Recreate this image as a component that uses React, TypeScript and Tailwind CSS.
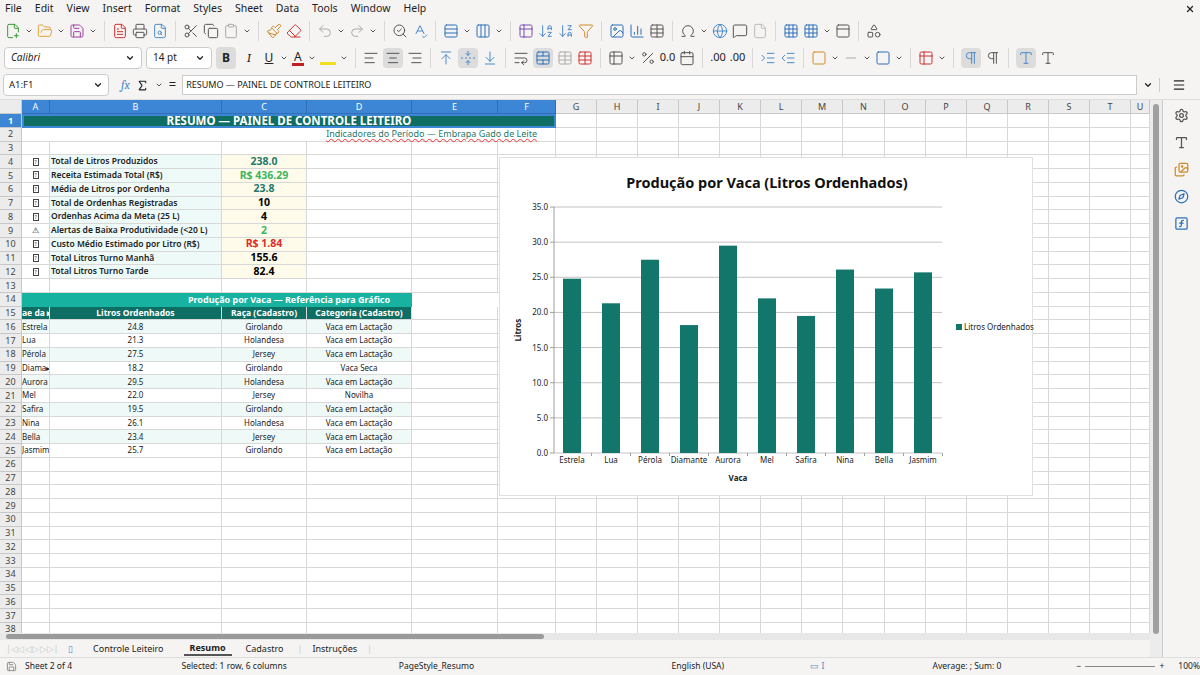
import React from "react";
import {
  FilePlus2, FolderOpen, Save, FileText, Printer, FileSearch, Scissors, Copy, Clipboard, Paintbrush, Eraser,
  Undo2, Redo2, SearchCheck, SpellCheck, Rows3, Columns3, ArrowDownAZ, ArrowDownZA, Filter, Image, BarChart3,
  Table2, Omega, Globe, MessageSquare, File, Grid3x3, PanelTop, Shapes, ChevronDown, AlignLeft, AlignCenter,
  AlignRight, ArrowUpToLine, FoldVertical, ArrowDownToLine, WrapText, TableCellsMerge, Table, Percent,
  Calendar, IndentIncrease, IndentDecrease, Square, Minus, Pilcrow, Menu, Settings, Type, Images, Compass,
  FunctionSquare, Sigma, X,
} from "lucide-react";

const F = { fontFamily: '"Noto Sans", "Open Sans", sans-serif' };

const colW = [28, 172, 85, 105, 86, 58, 41, 41, 41, 41, 41, 41, 41, 42, 41, 41, 41, 41, 41, 41, 19];
const colN = ["A","B","C","D","E","F","G","H","I","J","K","L","M","N","O","P","Q","R","S","T","U"];

const kpis: [string, string, string, string][] = [
  ["?", "Total de Litros Produzidos", "238.0", "text-[#1d7a6c]"],
  ["?", "Receita Estimada Total (R$)", "R$ 436.29", "text-[#3cb563]"],
  ["?", "Média de Litros por Ordenha", "23.8", "text-[#1d7a6c]"],
  ["?", "Total de Ordenhas Registradas", "10", "text-black"],
  ["?", "Ordenhas Acima da Meta (25 L)", "4", "text-black"],
  ["⚠", "Alertas de Baixa Produtividade (<20 L)", "2", "text-[#3cb563]"],
  ["?", "Custo Médio Estimado por Litro (R$)", "R$ 1.84", "text-[#e02b2b]"],
  ["?", "Total Litros Turno Manhã", "155.6", "text-black"],
  ["?", "Total Litros Turno Tarde", "82.4", "text-black"],
];

const cows: [string, number, string, string][] = [
  ["Estrela", 24.8, "Girolando", "Vaca em Lactação"],
  ["Lua", 21.3, "Holandesa", "Vaca em Lactação"],
  ["Pérola", 27.5, "Jersey", "Vaca em Lactação"],
  ["Diamante", 18.2, "Girolando", "Vaca Seca"],
  ["Aurora", 29.5, "Holandesa", "Vaca em Lactação"],
  ["Mel", 22.0, "Jersey", "Novilha"],
  ["Safira", 19.5, "Girolando", "Vaca em Lactação"],
  ["Nina", 26.1, "Holandesa", "Vaca em Lactação"],
  ["Bella", 23.4, "Jersey", "Vaca em Lactação"],
  ["Jasmim", 25.7, "Girolando", "Vaca em Lactação"],
];

function Cell({ i, children, cls = "" }: { i: number; children?: React.ReactNode; cls?: string }) {
  return (
    <div className={"shrink-0 h-full border-r border-b border-[#d8d8d8] flex items-center overflow-hidden whitespace-nowrap " + cls} style={{ width: colW[i] }}>
      {children}
    </div>
  );
}

function Row({ n, sel, children }: { n: number; sel?: boolean; children?: React.ReactNode }) {
  return (
    <div className="flex h-[13.75px] shrink-0">
      <div className={"w-[22px] shrink-0 border-r border-b border-[#c8c8c8] flex items-center justify-center text-[9px] " + (sel ? "bg-[#3d86d6] text-white font-bold" : "bg-[#ececec] text-[#444]")}>{n}</div>
      {children}
    </div>
  );
}

function Empty({ from = 0 }: { from?: number }) {
  return <>{colW.slice(from).map((_, k) => <Cell key={k} i={k + from} />)}</>;
}

function Chart() {
  const L = 54, T = 49, R = 442, B = 295;
  const u = (B - T) / 35;
  return (
    <div className="absolute left-[499px] top-[57px] w-[534px] h-[339px] bg-white border border-[#e0e0e0]">
      <svg width="534" height="339" style={F}>
        <text x="267" y="30" textAnchor="middle" fontSize="14.5" fontWeight="bold" fill="#111">Produção por Vaca (Litros Ordenhados)</text>
        {[0, 5, 10, 15, 20, 25, 30, 35].map((v) => (
          <g key={v}>
            <line x1={L} x2={R} y1={B - v * u} y2={B - v * u} stroke="#b3b3b3" strokeWidth="0.8" />
            <line x1={L - 4} x2={L} y1={B - v * u} y2={B - v * u} stroke="#888" strokeWidth="0.8" />
            <text x={L - 6} y={B - v * u + 3} textAnchor="end" fontSize="8" fill="#222">{v.toFixed(1)}</text>
          </g>
        ))}
        <line x1={L} x2={L} y1={T} y2={B} stroke="#888" strokeWidth="0.8" />
        {cows.map(([n, v], k) => {
          const cx = 72 + k * 39;
          return (
            <g key={n}>
              <rect x={cx - 9} y={B - v * u} width="18" height={v * u} fill="#13766b" />
              <text x={cx} y={B + 10} textAnchor="middle" fontSize="8" fill="#222">{n}</text>
              <line x1={cx + 19.5} x2={cx + 19.5} y1={B} y2={B + 3} stroke="#888" strokeWidth="0.8" />
            </g>
          );
        })}
        <text x="238" y="323" textAnchor="middle" fontSize="8" fontWeight="bold" fill="#222">Vaca</text>
        <text transform="translate(21 172) rotate(-90)" textAnchor="middle" fontSize="8" fontWeight="bold" fill="#222">Litros</text>
        <rect x="456" y="166" width="6" height="6" fill="#13766b" />
        <text x="464" y="172" fontSize="8" fill="#222">Litros Ordenhados</text>
      </svg>
    </div>
  );
}

const I = ({ c, color = "#555" }: { c: React.ElementType; color?: string }) => {
  const C = c;
  return <C size={16} color={color} strokeWidth={1.5} />;
};
const Dd = () => <ChevronDown size={8} color="#555" strokeWidth={3} />;
const Sep = () => <div className="w-px h-[20px] bg-[#d8d8d8] mx-[3px]" />;

export default function App() {
  return (
    <div className="w-[1200px] h-[675px] overflow-hidden bg-[#f5f4f2] flex flex-col text-[#222]" style={F}>
      <div className="h-[17px] shrink-0 flex items-center px-[5px] gap-[13px] text-[10.5px]">
        {["File","Edit","View","Insert","Format","Styles","Sheet","Data","Tools","Window","Help"].map((m) => <span key={m}>{m}</span>)}
        <div className="flex-1" />
        <X size={10} strokeWidth={3} />
      </div>
      <div className="h-[27px] shrink-0 flex items-center px-[5px] gap-[4px]">
        <I c={FilePlus2} color="#3a9a3a" /><Dd /><I c={FolderOpen} color="#e3a33a" /><Dd /><I c={Save} color="#a23fa8" /><Dd /><Sep />
        <I c={FileText} color="#c33" /><I c={Printer} /><I c={FileSearch} color="#4a8ac9" /><Sep />
        <I c={Scissors} /><I c={Copy} /><I c={Clipboard} color="#aaa" /><Dd /><Sep />
        <I c={Paintbrush} color="#d08a2a" /><I c={Eraser} color="#c33" /><Sep />
        <I c={Undo2} color="#aaa" /><Dd /><I c={Redo2} color="#aaa" /><Dd /><Sep />
        <I c={SearchCheck} /><I c={SpellCheck} color="#4a8ac9" /><Sep />
        <I c={Rows3} color="#2b6fb8" /><Dd /><I c={Columns3} color="#2b6fb8" /><Dd /><Sep />
        <I c={Table2} color="#7a4db8" /><I c={ArrowDownAZ} color="#4a8ac9" /><I c={ArrowDownZA} color="#4a8ac9" /><I c={Filter} color="#d08a2a" /><Sep />
        <I c={Image} color="#2b6fb8" /><I c={BarChart3} color="#2b6fb8" /><I c={Table} /><Sep />
        <I c={Omega} /><Dd /><I c={Globe} color="#4a8ac9" /><I c={MessageSquare} /><I c={File} color="#bbb" /><Sep />
        <I c={Grid3x3} color="#2b6fb8" /><I c={Grid3x3} color="#2b6fb8" /><Dd /><I c={PanelTop} /><Sep /><I c={Shapes} />
      </div>
      <div className="h-[27px] shrink-0 flex items-center px-[4px] gap-[4px]">
        <div className="w-[138px] h-[22px] bg-white border border-[#ccc] rounded-sm flex items-center justify-between px-[6px] text-[10px] italic">Calibri<ChevronDown size={10} strokeWidth={3} /></div>
        <div className="w-[66px] h-[22px] bg-white border border-[#ccc] rounded-sm flex items-center justify-between px-[6px] text-[10px]">14 pt<ChevronDown size={10} strokeWidth={3} /></div>
        <div className="w-[20px] h-[22px] bg-[#dcdcdc] rounded-sm flex items-center justify-center text-[12px] font-bold">B</div>
        <span className="w-[18px] text-center italic text-[13px] font-serif">I</span>
        <span className="w-[14px] text-center underline text-[12px]">U</span><Dd />
        <span className="text-[12px] border-b-[3px] border-[#c02020] leading-[13px] px-[2px]">A</span><Dd />
        <span className="w-[16px] h-[14px] border-b-[3px] border-[#f0e020]" /><Dd /><Sep />
        <I c={AlignLeft} /><div className="bg-[#dcdcdc] rounded-sm p-[2px]"><I c={AlignCenter} /></div><I c={AlignRight} /><Sep />
        <I c={ArrowUpToLine} color="#4a8ac9" /><div className="bg-[#dcdcdc] rounded-sm p-[2px]"><I c={FoldVertical} color="#4a8ac9" /></div><I c={ArrowDownToLine} color="#4a8ac9" /><Sep />
        <I c={WrapText} /><div className="bg-[#dcdcdc] rounded-sm p-[2px]"><I c={TableCellsMerge} color="#2b6fb8" /></div><I c={Table} color="#aaa" /><I c={Table} color="#c33" /><Sep />
        <I c={Table2} /><Dd /><I c={Percent} /><span className="text-[11px]">0.0</span><I c={Calendar} /><Sep />
        <span className="text-[11px]">.00</span><span className="text-[11px]">.00</span><Sep />
        <I c={IndentIncrease} color="#4a8ac9" /><I c={IndentDecrease} color="#4a8ac9" /><Sep />
        <I c={Square} color="#d08a2a" /><Dd /><I c={Minus} color="#aaa" /><Dd /><I c={Square} color="#2b6fb8" /><Dd /><Sep />
        <I c={Table2} color="#c33" /><Dd /><Sep />
        <div className="bg-[#dcdcdc] rounded-sm p-[2px]"><I c={Pilcrow} color="#4a8ac9" /></div><I c={Pilcrow} /><Sep />
        <div className="bg-[#dcdcdc] rounded-sm p-[2px]"><I c={Type} color="#4a8ac9" /></div><I c={Type} />
      </div>
      <div className="h-[29px] shrink-0 flex items-center px-[3px] gap-[6px] border-b border-[#ddd]">
        <div className="w-[106px] h-[22px] bg-white border border-[#ccc] rounded-sm flex items-center justify-between px-[5px] text-[9.5px]">A1:F1<ChevronDown size={10} strokeWidth={3} /></div>
        <span className="italic text-[#4a8ac9] text-[12px] font-serif ml-[6px]">fx</span>
        <Sigma size={13} /><Dd /><span className="text-[13px]">=</span>
        <div className="flex-1 h-[20px] bg-white border border-[#ccc] flex items-center px-[3px] text-[9px]">RESUMO — PAINEL DE CONTROLE LEITEIRO</div>
        <ChevronDown size={10} strokeWidth={3} />
        <div className="w-[38px] flex justify-center border-l border-[#ccc]"><Menu size={14} /></div>
      </div>
      <div className="flex h-[557px] shrink-0">
        <div className="w-[1150px] flex flex-col overflow-hidden relative">
          <div className="relative flex-1 overflow-hidden bg-white">
            <div className="flex h-[14px] text-[9px]">
              <div className="w-[22px] shrink-0 bg-[#ececec] border-r border-b border-[#c8c8c8]" />
              {colN.map((c, k) => (
                <div key={c} className={"shrink-0 flex items-center justify-center border-r border-b " + (k < 6 ? "bg-[#3d86d6] text-white border-[#2f6db5]" : "bg-[#ececec] text-[#444] border-[#c8c8c8]")} style={{ width: colW[k] }}>{c}</div>
              ))}
            </div>
            <Row n={1} sel>
              <div className="shrink-0 h-full w-[534px] bg-[#0f6e63] border-2 border-[#3d86d6] flex items-center justify-center text-white font-bold text-[11.5px]">RESUMO — PAINEL DE CONTROLE LEITEIRO</div>
              <Empty from={6} />
            </Row>
            <Row n={2}>
              <div className="shrink-0 h-full w-[534px] border-b border-r border-[#d8d8d8] flex items-center justify-end pr-[18px] text-[9px] text-[#1d7a6c] underline decoration-wavy decoration-[#e33]">Indicadores do Período — Embrapa Gado de Leite</div>
              <Empty from={6} />
            </Row>
            <Row n={3}><Empty /></Row>
            {kpis.map(([ic, l, v, c], k) => (
              <Row key={k} n={4 + k}>
                <Cell i={0} cls="justify-center text-[8px]">{ic === "?" ? <span className="inline-block w-[6px] h-[8px] border border-[#444] text-[5px] leading-[6px] text-center">?</span> : ic}</Cell>
                <Cell i={1} cls="bg-[#eefaf8] px-[1px] text-[8.5px] font-semibold">{l}</Cell>
                <Cell i={2} cls={"bg-[#fffbea] justify-center text-[10.5px] font-bold " + c}>{v}</Cell>
                <Empty from={3} />
              </Row>
            ))}
            <Row n={13}><Empty /></Row>
            <Row n={14}>
              <div className="shrink-0 h-full w-[534px] bg-[linear-gradient(to_right,#17b2a0_390px,transparent_390px)] flex items-center justify-center text-white font-bold text-[9px]">Produção por Vaca — Referência para Gráfico</div>
              <Empty from={6} />
            </Row>
            <Row n={15}>
              {["ae da ▸", "Litros Ordenhados", "Raça (Cadastro)", "Categoria (Cadastro)"].map((h, k) => (
                <Cell key={k} i={k} cls={"bg-[#0f6e63] border-[#5a9a90] text-white font-bold text-[8.5px] " + (k === 0 ? "" : "justify-center")}>{h}</Cell>
              ))}
              <Empty from={4} />
            </Row>
            {cows.map(([n, v, r, c], k) => (
              <Row key={n} n={16 + k}>
                <Cell i={0} cls={"text-[8px] " + (k % 2 === 0 ? "bg-[#effaf8]" : "")}>{n === "Diamante" ? "Diama▸" : n}</Cell>
                <Cell i={1} cls={"justify-center text-[8px] " + (k % 2 === 0 ? "bg-[#effaf8]" : "")}>{v.toFixed(1)}</Cell>
                <Cell i={2} cls={"justify-center text-[8px] " + (k % 2 === 0 ? "bg-[#effaf8]" : "")}>{r}</Cell>
                <Cell i={3} cls={"justify-center text-[8px] " + (k % 2 === 0 ? "bg-[#effaf8]" : "")}>{c}</Cell>
                <Empty from={4} />
              </Row>
            ))}
            {Array.from({ length: 13 }, (_, k) => <Row key={k} n={26 + k}><Empty /></Row>)}
            <Chart />
          </div>
          <div className="h-[7px] shrink-0 bg-[#e8e8e8] flex items-center px-[6px]"><div className="w-[538px] h-[5px] rounded bg-[#9a9a9a]" /></div>
          <div className="h-[17px] shrink-0 flex items-center text-[9px] gap-[10px] px-[6px]">
            <span className="text-[#ccc] tracking-tighter">|◁◁ ◁▷ ▷▷|</span>
            <span className="text-[#4a8ac9]">▯</span>
            <span className="px-[10px]">Controle Leiteiro</span>
            <span className="px-[6px] font-bold border-b-2 border-[#555]">Resumo</span>
            <span className="px-[4px]">Cadastro</span><span className="text-[#ccc]">|</span>
            <span>Instruções</span><span className="text-[#ccc]">|</span>
          </div>
        </div>
        <div className="w-[12px] bg-[#ececec] flex flex-col items-center pt-[4px]">
          <div className="w-[6px] h-[530px] rounded bg-[#a0a0a0]" />
        </div>
        <div className="w-[38px] flex flex-col items-center gap-[12px] pt-[8px] border-l border-[#ccc]">
          <Settings size={15} color="#555" /><Type size={15} color="#555" /><Images size={15} color="#d08a2a" /><Compass size={15} color="#2b6fb8" /><FunctionSquare size={15} color="#2b6fb8" />
        </div>
      </div>
      <div className="h-[18px] shrink-0 flex items-center text-[8.5px] border-t border-[#ddd]">
        <div className="w-[180px] flex items-center gap-[8px] px-[6px]"><Save size={11} color="#888" />Sheet 2 of 4</div>
        <div className="w-[220px] px-[2px]">Selected: 1 row, 6 columns</div>
        <div className="w-[220px]">PageStyle_Resumo</div>
        <div className="w-[160px] text-center">English (USA)</div>
        <div className="w-[80px] flex justify-center text-[#4a8ac9]">▭ I</div>
        <div className="w-[220px] text-center">Average: ; Sum: 0</div>
        <div className="flex items-center gap-[4px]">− <div className="w-[70px] h-px bg-[#888]" /> +</div>
        <div className="ml-[14px]">100%</div>
      </div>
    </div>
  );
}
